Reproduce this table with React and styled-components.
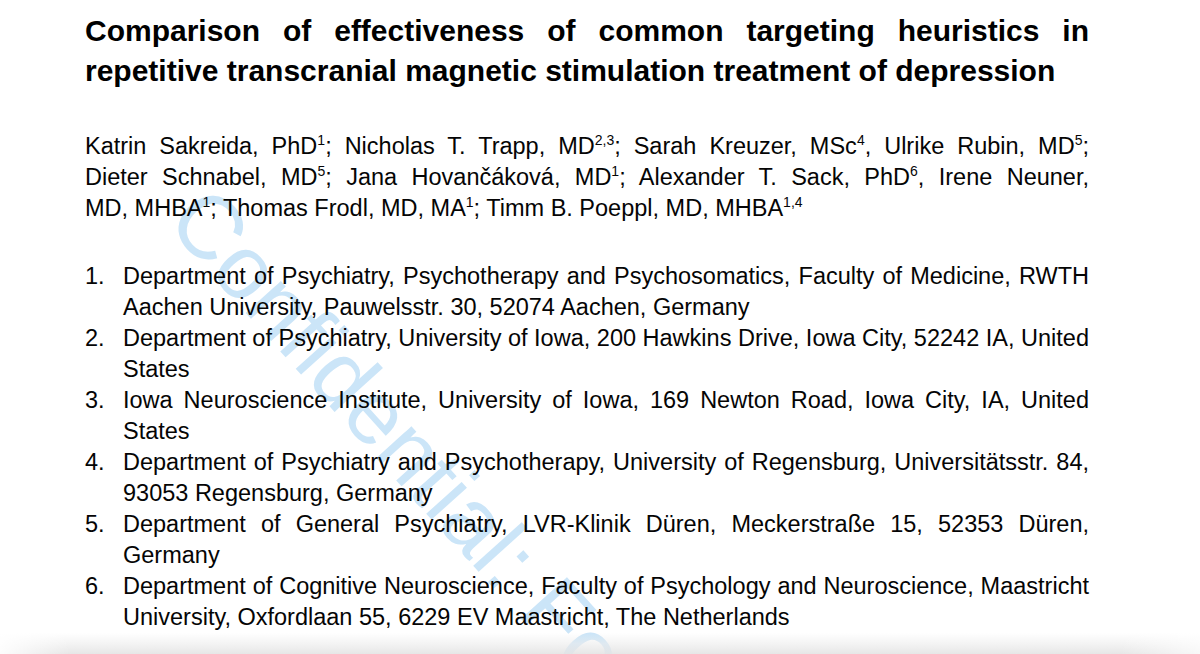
import React from 'react';
import styled, { createGlobalStyle } from 'styled-components';

const GlobalStyle = createGlobalStyle`
  html, body {
    margin: 0;
    padding: 0;
    background: #ffffff;
  }
  body {
    width: 1200px;
    height: 654px;
    overflow: hidden;
    font-family: "Liberation Sans", Arial, Helvetica, sans-serif;
    color: #050505;
  }
`;

const Sheet = styled.div`
  position: relative;
  width: 1200px;
  height: 654px;
  overflow: hidden;
  display: flex;
  flex-direction: column;
`;

const Page = styled.main`
  position: relative;
  z-index: 1;
  flex: 1;
  padding: 11px 111px 0 85px;
`;

const PageEdge = styled.div`
  position: relative;
  z-index: 1;
  height: 28px;
  background:
    linear-gradient(to right, rgba(255,255,255,0.9) 0, rgba(255,255,255,0) 70px, rgba(255,255,255,0) 1120px, rgba(255,255,255,0.7) 1200px),
    linear-gradient(to bottom, rgba(255,255,255,0) 0, rgba(236,236,236,0.6) 50%, rgba(228,228,228,0.9) 100%);
`;

const Title = styled.h1`
  margin: 0;
  font-size: 30px;
  font-weight: 700;
  line-height: 40px;
  color: #000;
`;

const Authors = styled.p`
  margin: 40px 0 0;
  font-size: 23.5px;
  line-height: 31px;
`;

const Line = styled.span`
  display: block;
  text-align: justify;
  text-align-last: ${p => (p.$last ? 'left' : 'justify')};
  white-space: nowrap;
`;

const Sup = styled.sup`
  font-size: 14px;
  line-height: 0;
  vertical-align: 9px;
`;

const Affiliations = styled.ol`
  list-style: none;
  margin: 37px 0 0;
  padding: 0;
  font-size: 23.5px;
  line-height: 31px;
`;

const Item = styled.li`
  display: grid;
  grid-template-columns: 38px 1fr;
`;

const Num = styled.span`
  display: block;
`;

const Watermark = styled.div`
  position: absolute;
  z-index: 0;
  left: 221px;
  top: 172px;
  transform-origin: 0 0;
  transform: rotate(48deg);
  font-family: "Liberation Sans", Arial, sans-serif;
  font-size: 90px;
  line-height: 1;
  white-space: nowrap;
  color: #cbe5f8;
  pointer-events: none;
`;

const authors = [
  [
    'Katrin Sakreida, PhD', ['1'], '; Nicholas T. Trapp, MD', ['2,3'],
    '; Sarah Kreuzer, MSc', ['4'], ', Ulrike Rubin, MD', ['5'], ';'
  ],
  [
    'Dieter Schnabel, MD', ['5'], '; Jana Hovančáková, MD', ['1'],
    '; Alexander T. Sack, PhD', ['6'], ', Irene Neuner,'
  ],
  ['MD, MHBA', ['1'], '; Thomas Frodl, MD, MA', ['1'], '; Timm B. Poeppl, MD, MHBA', ['1,4']]
];

const affiliations = [
  [
    'Department of Psychiatry, Psychotherapy and Psychosomatics, Faculty of Medicine, RWTH',
    'Aachen University, Pauwelsstr. 30, 52074 Aachen, Germany'
  ],
  [
    'Department of Psychiatry, University of Iowa, 200 Hawkins Drive, Iowa City, 52242 IA, United',
    'States'
  ],
  [
    'Iowa Neuroscience Institute, University of Iowa, 169 Newton Road, Iowa City, IA, United',
    'States'
  ],
  [
    'Department of Psychiatry and Psychotherapy, University of Regensburg, Universitätsstr. 84,',
    '93053 Regensburg, Germany'
  ],
  [
    'Department of General Psychiatry, LVR-Klinik Düren, Meckerstraße 15, 52353 Düren,',
    'Germany'
  ],
  [
    'Department of Cognitive Neuroscience, Faculty of Psychology and Neuroscience, Maastricht',
    'University, Oxfordlaan 55, 6229 EV Maastricht, The Netherlands'
  ]
];

export default function App() {
  return (
    <Sheet>
      <GlobalStyle />
      <Watermark aria-hidden="true">Confidential: For Review Only</Watermark>
      <Page>
        <Title>
          <Line>Comparison of effectiveness of common targeting heuristics in</Line>
          <Line $last>repetitive transcranial magnetic stimulation treatment of depression</Line>
        </Title>

        <Authors>
          {authors.map((parts, i) => (
            <Line key={i} $last={i === authors.length - 1}>
              {parts.map((part, j) =>
                Array.isArray(part) ? <Sup key={j}>{part[0]}</Sup> : <React.Fragment key={j}>{part}</React.Fragment>
              )}
            </Line>
          ))}
        </Authors>

        <Affiliations>
          {affiliations.map((lines, i) => (
            <Item key={i}>
              <Num>{i + 1}.</Num>
              <div>
                {lines.map((text, j) => (
                  <Line key={j} $last={j === lines.length - 1}>{text}</Line>
                ))}
              </div>
            </Item>
          ))}
        </Affiliations>
      </Page>
      <PageEdge />
    </Sheet>
  );
}
